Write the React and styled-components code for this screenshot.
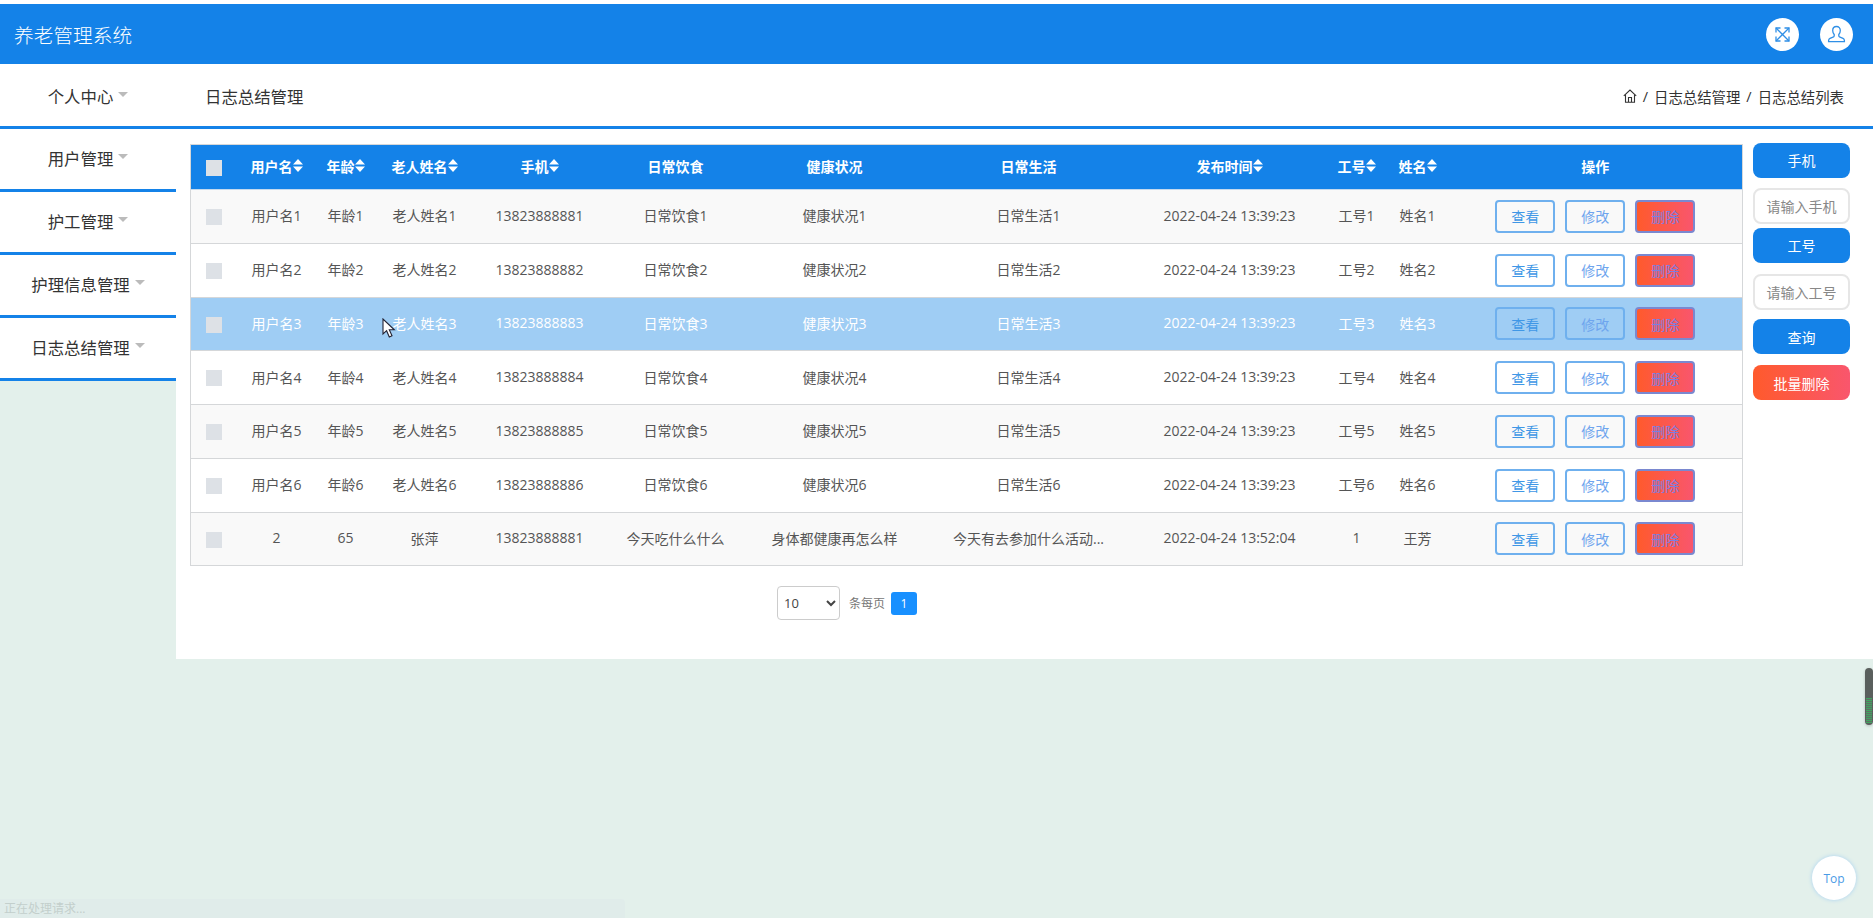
import styled, { createGlobalStyle } from 'styled-components';

const GlobalStyle = createGlobalStyle`
  html, body {
    margin: 0;
    padding: 0;
    height: 100%;
    overflow: hidden;
    background: #e3f0eb;
    font-family: "Open Sans", "Noto Sans CJK SC", sans-serif;
  }
  * { box-sizing: border-box; }
`;

const menus = ['个人中心', '用户管理', '护工管理', '护理信息管理', '日志总结管理'];

const columns = [
  { title: '', width: 48 },
  { title: '用户名', width: 76, sort: true, key: 'user' },
  { title: '年龄', width: 62, sort: true, key: 'age' },
  { title: '老人姓名', width: 96, sort: true, key: 'elder' },
  { title: '手机', width: 134, sort: true, key: 'phone' },
  { title: '日常饮食', width: 138, key: 'food' },
  { title: '健康状况', width: 180, key: 'health' },
  { title: '日常生活', width: 208, key: 'life' },
  { title: '发布时间', width: 194, sort: true, key: 'time' },
  { title: '工号', width: 60, sort: true, key: 'no' },
  { title: '姓名', width: 62, sort: true, key: 'name' },
  { title: '操作', width: 294 },
];

const rows = [1, 2, 3, 4, 5, 6].map((i) => ({
  user: `用户名${i}`,
  age: `年龄${i}`,
  elder: `老人姓名${i}`,
  phone: `1382388888${i}`,
  food: `日常饮食${i}`,
  health: `健康状况${i}`,
  life: `日常生活${i}`,
  time: '2022-04-24 13:39:23',
  no: `工号${i}`,
  name: `姓名${i}`,
}));

rows.push({
  user: '2',
  age: '65',
  elder: '张萍',
  phone: '13823888881',
  food: '今天吃什么什么',
  health: '身体都健康再怎么样',
  life: '今天有去参加什么活动...',
  time: '2022-04-24 13:52:04',
  no: '1',
  name: '王芳',
});

const ExpandIcon = () => (
  <svg width="17" height="17" viewBox="0 0 17 17" fill="none" stroke="#2f8fe6" strokeWidth="1.3">
    <path d="M2 2l13 13M15 2L2 15" />
    <path d="M2 6.5V2h4.5M10.5 2H15v4.5M15 10.5V15h-4.5M6.5 15H2v-4.5" />
  </svg>
);

const UserIcon = () => (
  <svg width="19" height="19" viewBox="0 0 19 19" fill="none" stroke="#2f8fe6" strokeWidth="1.3">
    <path d="M9.5 1.5c-2.4 0-3.8 1.8-3.8 4 0 1.700.7 3.100 1.500 4v1.200c0 .7-.5 1.100-1.200 1.400l-3 1.300c-.9.4-1.300 1-1.400 2.100v1.100h15.800v-1.100c-.1-1.100-.5-1.700-1.400-2.100l-3-1.300c-.7-.3-1.200-.7-1.200-1.400V9.500c.8-.9 1.500-2.300 1.500-4 0-2.200-1.400-4-3.800-4z" />
  </svg>
);

const HomeIcon = () => (
  <svg width="14" height="14" viewBox="0 0 14 14" fill="none" stroke="#333" strokeWidth="1.100">
    <path d="M.8 6.800L7 1l6.200 5.800" />
    <path d="M2.500 5.500v7.700h9V5.500" />
    <path d="M5.500 13V8.500h3V13" />
  </svg>
);

const SortIcon = () => (
  <svg width="10" height="13" viewBox="0 0 10 13" fill="#fff">
    <path d="M5 0l5 5.500H0zM5 13L0 7.500h10z" />
  </svg>
);

const CursorIcon = () => (
  <svg width="14" height="20" viewBox="0 0 14 20">
    <path d="M1 1v15l3.600-3.300L7.300 19l2.700-1.200-2.700-6h5z" fill="#fff" stroke="#223" strokeWidth="1.100" />
  </svg>
);

export default function App() {
  return (
    <Page>
      <GlobalStyle />
      <Header>
        <Logo>养老管理系统</Logo>
        <HeaderIcons>
          <RoundIcon><ExpandIcon /></RoundIcon>
          <RoundIcon><UserIcon /></RoundIcon>
        </HeaderIcons>
      </Header>

      <Body>
        <Sidebar>
          {menus.map((menu, i) => (
            <MenuItem key={menu} $first={i === 0}>
              {menu}
              <Caret />
            </MenuItem>
          ))}
        </Sidebar>

        <Main>
          <TitleBar>
            <PageTitle>日志总结管理</PageTitle>
            <Breadcrumb>
              <HomeIcon />
              <span>/</span>
              <span>日志总结管理</span>
              <span>/</span>
              <span>日志总结列表</span>
            </Breadcrumb>
          </TitleBar>

          <Content>
            <TableArea>
              <Table>
                <colgroup>
                  {columns.map((col, i) => (
                    <col key={i} width={col.width} />
                  ))}
                </colgroup>
                <thead>
                  <tr>
                    {columns.map((col, i) => (
                      <Th key={i}>
                        {i === 0 ? <CheckBox /> : col.title}
                        {col.sort && <SortIcon />}
                      </Th>
                    ))}
                  </tr>
                </thead>
                <tbody>
                  {rows.map((row, i) => (
                    <Tr key={i} $odd={i % 2 === 0} $hover={i === 2}>
                      <Td><CheckBox /></Td>
                      {columns.slice(1, -1).map((col) => (
                        <Td key={col.key}>{row[col.key]}</Td>
                      ))}
                      <Td>
                        <Actions>
                          <ViewButton>查看</ViewButton>
                          <EditButton>修改</EditButton>
                          <DeleteButton>删除</DeleteButton>
                        </Actions>
                      </Td>
                    </Tr>
                  ))}
                </tbody>
              </Table>

              <Pager>
                <PageSize defaultValue="10">
                  <option value="10">10</option>
                </PageSize>
                <PagerText>条每页</PagerText>
                <PageNumber>1</PageNumber>
              </Pager>
            </TableArea>

            <SearchColumn>
              <SearchLabel>手机</SearchLabel>
              <SearchInput placeholder="请输入手机" />
              <SearchLabel>工号</SearchLabel>
              <SearchInput $second placeholder="请输入工号" />
              <QueryButton>查询</QueryButton>
              <BatchButton>批量删除</BatchButton>
            </SearchColumn>
          </Content>
        </Main>
      </Body>

      <Pointer><CursorIcon /></Pointer>
      <Meter><MeterLevel /></Meter>
      <TopButton>Top</TopButton>
      <StatusBar>正在处理请求...</StatusBar>
    </Page>
  );
}

const Page = styled.div`
  height: 918px;
  padding-top: 4px;
  background: linear-gradient(#fff 4px, #e3f0eb 4px);
  color: #333;
`;

const Header = styled.header`
  height: 60px;
  background: #1482e8;
  display: flex;
  align-items: center;
  justify-content: space-between;
  padding: 0 20px 0 14px;
`;

const Logo = styled.div`
  color: #fff;
  font-size: 19.700px;
  font-weight: 300;
`;

const HeaderIcons = styled.div`
  display: flex;
  gap: 21px;
`;

const RoundIcon = styled.div`
  width: 33px;
  height: 33px;
  border-radius: 50%;
  background: #fff;
  display: flex;
  align-items: center;
  justify-content: center;
`;

const Body = styled.div`
  display: flex;
  align-items: flex-start;
`;

const Sidebar = styled.nav`
  width: 176px;
  flex: none;
`;

const MenuItem = styled.div`
  height: ${(p) => (p.$first ? '65px' : '63px')};
  padding: ${(p) => (p.$first ? '2px 0 0' : '0 0 2px')};
  background: #fff;
  border-bottom: 3px solid #1482e8;
  display: flex;
  align-items: center;
  justify-content: center;
  gap: 5px;
  font-size: 16.400px;
  color: #333;
`;

const Caret = styled.i`
  width: 0;
  height: 0;
  border: 5px solid transparent;
  border-top: 5px solid #bbb;
  border-bottom: 0;
  margin-top: -3px;
`;

const Main = styled.main`
  flex: 1;
  background: #fff;
  min-width: 0;
`;

const TitleBar = styled.div`
  height: 65px;
  padding: 2px 29px 0;
  border-bottom: 3px solid #1482e8;
  display: flex;
  align-items: center;
  justify-content: space-between;
`;

const PageTitle = styled.div`
  font-size: 16.400px;
  color: #333;
`;

const Breadcrumb = styled.div`
  display: flex;
  align-items: center;
  gap: 6px;
  font-size: 14.400px;
  color: #333;
`;

const Content = styled.div`
  display: flex;
  align-items: flex-start;
  gap: 11px;
  padding: 15px 23px 39px 14px;
`;

const TableArea = styled.div`
  width: 1552px;
  flex: none;
`;

const Table = styled.table`
  width: 1552px;
  table-layout: fixed;
  border-collapse: collapse;
  border: 1px solid #d5d7d9;
  font-size: 14px;
`;

const Th = styled.th`
  height: 45px;
  padding: 0 0 2px;
  background: #1482e8;
  color: #fff;
  font-size: 14px;
  font-weight: 700;
  text-align: center;
  white-space: nowrap;
  border-bottom: 1px solid #c5d9ee;
`;

const Tr = styled.tr`
  height: 53.750px;
  background: ${(p) => (p.$hover ? '#9fcdf4' : p.$odd ? '#f9f9f9' : '#fff')};
  color: ${(p) => (p.$hover ? '#fff' : '#555')};
  border-bottom: 1px solid #d5d7d9;
`;

const Td = styled.td`
  padding: 0 0 2px;
  text-align: center;
  white-space: nowrap;
`;

const CheckBox = styled.span`
  display: inline-block;
  width: 16px;
  height: 16px;
  margin-right: 2px;
  background: #dde1e6;
  vertical-align: middle;
`;

const Actions = styled.div`
  display: flex;
  justify-content: center;
  gap: 10px;
  margin-top: 2px;
`;

const ViewButton = styled.button`
  width: 60px;
  height: 33px;
  padding: 0;
  border: 2px solid #6fb0ee;
  border-radius: 4px;
  background: transparent;
  color: #3f97e6;
  font: 14px "Noto Sans CJK SC", sans-serif;
`;

const EditButton = styled(ViewButton)`
  color: #6ea5ee;
`;

const DeleteButton = styled(ViewButton)`
  background: linear-gradient(90deg, #ff5a2c, #f9566d);
  border-color: #7a88d0;
  color: #7a7fe2;
`;

const Pager = styled.div`
  display: flex;
  align-items: center;
  justify-content: center;
  padding: 20px 238px 0 0;
`;

const PageSize = styled.select`
  width: 63px;
  height: 34px;
  margin-right: 9px;
  padding: 0 2px;
  border: 1px solid #ccc;
  border-radius: 4px;
  background: #fff;
  color: #444;
  font: 13px "Open Sans", sans-serif;
`;

const PagerText = styled.span`
  font-size: 12px;
  color: #777;
  margin-right: 6px;
`;

const PageNumber = styled.span`
  width: 26px;
  height: 23px;
  border-radius: 3px;
  background: #1890ff;
  color: #fff;
  font-size: 12px;
  display: flex;
  align-items: center;
  justify-content: center;
`;

const SearchColumn = styled.div`
  width: 97px;
  flex: none;
  display: flex;
  flex-direction: column;
  margin-top: -1px;
`;

const SearchLabel = styled.div`
  height: 35px;
  padding-bottom: 2px;
  border-radius: 8px;
  background: #1482e8;
  color: #fff;
  font-size: 14px;
  display: flex;
  align-items: center;
  justify-content: center;
`;

const SearchInput = styled.input`
  width: 100%;
  height: 36px;
  margin: ${(p) => (p.$second ? '11px 0 9px' : '10px 0 4px')};
  padding: 0;
  border: 2px solid #e6e6e6;
  border-radius: 8px;
  background: #fff;
  text-align: center;
  font: 14px "Noto Sans CJK SC", sans-serif;
  &::placeholder { color: #888; opacity: 1; }
`;

const QueryButton = styled.button`
  height: 35px;
  padding: 0;
  border: 0;
  border-radius: 8px;
  background: #1482e8;
  color: #fff;
  font: 14px "Noto Sans CJK SC", sans-serif;
`;

const BatchButton = styled(QueryButton)`
  margin-top: 11px;
  background: linear-gradient(90deg, #ff5a2c, #f9566d);
`;

const Pointer = styled.div`
  position: absolute;
  left: 382px;
  top: 318px;
  line-height: 0;
`;

const Meter = styled.div`
  position: absolute;
  right: 0;
  top: 668px;
  width: 8px;
  height: 57px;
  border-radius: 4px;
  background: #5a5f5d;
  box-shadow: 0 1px 3px rgba(0, 0, 0, 0.2);
  display: flex;
  align-items: flex-end;
  padding: 0 1px 2px;
`;

const MeterLevel = styled.div`
  width: 100%;
  height: 25px;
  background: repeating-linear-gradient(#3fa45f 0 1px, #5f6f65 1px 2px);
`;

const TopButton = styled.div`
  position: absolute;
  left: 1812px;
  top: 856px;
  width: 44px;
  height: 44px;
  border-radius: 50%;
  background: #fff;
  box-shadow: 0 0 4px #a9d2f2;
  color: #4a9be6;
  font-size: 12px;
  display: flex;
  align-items: center;
  justify-content: center;
`;

const StatusBar = styled.div`
  position: absolute;
  left: 0;
  top: 899px;
  width: 625px;
  height: 19px;
  border-radius: 0 4px 0 0;
  background: #e0ecea;
  color: #c3cfcc;
  font-size: 12px;
  line-height: 19px;
  padding-left: 4px;
`;
